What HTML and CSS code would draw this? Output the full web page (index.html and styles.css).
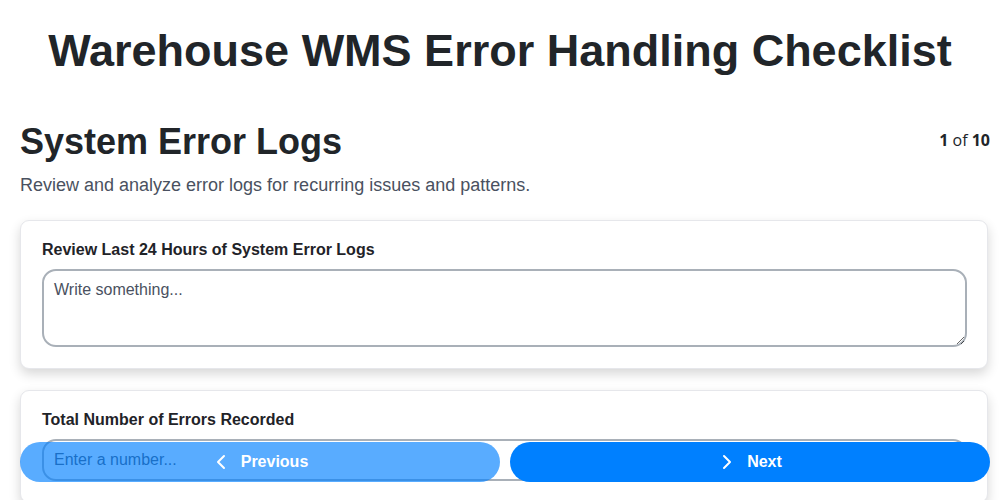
FILE: index.html
```html
<!DOCTYPE html>
<html lang="en">
<head>
<meta charset="utf-8">
<title>Warehouse WMS Error Handling Checklist</title>
<link rel="stylesheet" href="styles.css">
</head>
<body>
<div class="page">
  <h1 class="title">Warehouse WMS Error Handling Checklist</h1>
  <section class="step">
    <div class="step-head">
      <h2 class="step-title">System Error Logs</h2>
      <div class="counter"><b>1</b> of <b>10</b></div>
    </div>
    <p class="step-desc">Review and analyze error logs for recurring issues and patterns.</p>
    <div class="cards">
      <div class="card">
        <label class="field-label">Review Last 24 Hours of System Error Logs</label>
        <textarea class="field-textarea" placeholder="Write something..."></textarea>
      </div>
      <div class="card">
        <label class="field-label">Total Number of Errors Recorded</label>
        <input class="field-input" type="number" placeholder="Enter a number...">
      </div>
    </div>
  </section>
</div>
<nav class="nav">
  <button class="btn btn-prev">
    <svg width="16" height="16" viewBox="0 0 16 16"><polyline points="12,2 6,8 12,14" fill="none" stroke="#fff" stroke-width="2" stroke-linecap="round" stroke-linejoin="round"/></svg>
    <span>Previous</span>
  </button>
  <button class="btn btn-next">
    <svg width="16" height="16" viewBox="0 0 16 16"><polyline points="6,2 12,8 6,14" fill="none" stroke="#fff" stroke-width="2" stroke-linecap="round" stroke-linejoin="round"/></svg>
    <span>Next</span>
  </button>
</nav>
</body>
</html>
```
FILE: styles.css
```css
* { box-sizing: border-box; }
html, body { margin: 0; padding: 0; background: #fff; }
body {
  font-family: "Liberation Sans", Arial, sans-serif;
  color: #1f2328;
  overflow: hidden;
}
.page { padding: 0; }
.title {
  margin: 0;
  padding-top: 27px;
  text-align: center;
  font-size: 45px;
  line-height: 48px;
  font-weight: 700;
  color: #212529;
}
.step { margin-top: 46px; padding: 0 10px 0 20px; }
.step-head {
  display: flex;
  justify-content: space-between;
  align-items: flex-start;
}
.step-title {
  margin: 0;
  font-size: 36px;
  line-height: 42px;
  font-weight: 700;
  color: #212529;
}
.counter {
  font-family: "Open Sans", "Liberation Sans", sans-serif;
  font-size: 16px;
  line-height: 20px;
  margin-top: 9px;
  color: #212529;
}
.counter b { font-weight: 700; }
.step-desc {
  margin: 11px 0 0;
  font-size: 18px;
  line-height: 22px;
  color: #4a5160;
}
.cards {
  margin-top: 24px;
  display: flex;
  flex-direction: column;
  gap: 21px;
  margin-right: 2px;
}
.card {
  background: #fff;
  border: 1px solid #e6e7eb;
  border-radius: 9px;
  padding: 20px 20px 21px 21px;
  box-shadow: 0 5px 12px rgba(0, 0, 0, 0.16);
  display: flex;
  flex-direction: column;
}
.field-label {
  font-size: 16px;
  line-height: 18px;
  font-weight: 700;
  color: #1f2328;
  margin-bottom: 10px;
}
.field-textarea, .field-input {
  font-family: "Liberation Sans", Arial, sans-serif;
  font-size: 16px;
  color: #1f2328;
  border: 2px solid #a9b0b8;
  border-radius: 14px;
  padding: 10px 10px;
  background: #fff;
  width: 100%;
}
.field-textarea { height: 78px; resize: vertical; }
.field-input { height: 42px; }
.field-textarea::placeholder, .field-input::placeholder { color: #4a5160; opacity: 1; }
.nav {
  position: fixed;
  left: 20px;
  right: 10px;
  bottom: 18px;
  display: flex;
  gap: 10px;
}
.btn {
  flex: 1;
  height: 40px;
  border: none;
  border-radius: 20px;
  color: #fff;
  font-family: "Liberation Sans", Arial, sans-serif;
  font-size: 16px;
  font-weight: 700;
  display: flex;
  align-items: center;
  justify-content: center;
  gap: 13px;
}
.btn-prev { background: #0080ff; opacity: 0.65; }
.btn-next { background: #0080ff; }
```
